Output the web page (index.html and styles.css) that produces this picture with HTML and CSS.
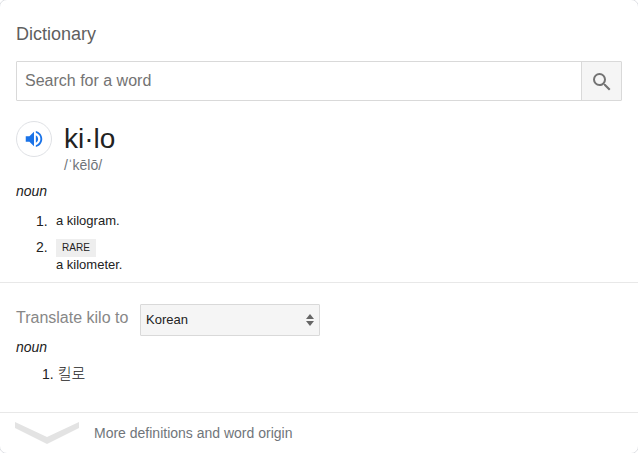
FILE: index.html
```html
<!DOCTYPE html>
<html lang="en">
<head>
<meta charset="utf-8">
<title>Dictionary</title>
<link rel="stylesheet" href="styles.css">
</head>
<body>
<main class="card">
  <section class="dictionary">
    <h1 class="title">Dictionary</h1>
    <form class="search">
      <span class="search-text">Search for a word</span>
      <span class="search-button">
        <svg width="24" height="24" viewBox="0 0 24 24"><path fill="#737373" d="M15.500 14h-.79l-.28-.27A6.471 6.471 0 0 0 16 9.500 6.500 6.500 0 1 0 9.500 16c1.610 0 3.090-.59 4.230-1.570l.27.28v.79l5 4.990L20.490 19l-4.990-5zm-6 0C7.010 14 5 11.990 5 9.500S7.010 5 9.500 5 14 7.010 14 9.500 11.990 14 9.500 14z"/></svg>
      </span>
    </form>
    <header class="word">
      <span class="speaker">
        <svg width="22" height="22" viewBox="0 0 24 24"><path fill="#1a73e8" d="M3 9v6h4l5 5V4L7 9H3zm13.500 3A4.500 4.500 0 0 0 14 7.970v8.050c1.480-.73 2.500-2.250 2.500-4.020zM14 3.230v2.060c2.890.86 5 3.540 5 6.710s-2.110 5.850-5 6.710v2.060c4.010-.91 7-4.490 7-8.770s-2.990-7.860-7-8.770z"/></svg>
      </span>
      <div>
        <div class="headword">ki·lo</div>
        <div class="phonetic">/ˈkēlō/</div>
      </div>
    </header>
    <div class="pos">noun</div>
    <div class="definition first"><span class="number">1.</span><span>a kilogram.</span></div>
    <div class="definition second"><span class="number">2.</span><div><span class="tag">RARE</span><div>a kilometer.</div></div></div>
  </section>
  <section class="translate">
    <div class="translate-row">
      <span class="translate-label">Translate kilo to</span>
      <div class="select"><span>Korean</span>
        <svg width="8" height="12" viewBox="0 0 8 12"><path fill="#666" d="M0 5L4 0l4 5zM0 7h8l-4 5z"/></svg>
      </div>
    </div>
    <div class="pos">noun</div>
    <div class="translation"><span>1.</span><span class="korean" lang="ko">킬로</span></div>
  </section>
  <footer class="more">
    <svg class="chevron" width="64" height="22" viewBox="0 0 64 22"><path fill="#e3e3e3" d="M0 0l32 15L64 0v6L32 22 0 6z"/></svg>
    <span>More definitions and word origin</span>
  </footer>
</main>
</body>
</html>
```
FILE: styles.css
```css
* { box-sizing: border-box; }
body {
  margin: 0;
  overflow: hidden;
  background: #fff;
  color: #222;
  font-family: "Liberation Sans", Arial, "Noto Sans CJK KR", sans-serif;
  font-size: 13px;
}
.card {
  width: 640px;
  height: 455px;
  margin: -1px;
  border: 1px solid #dfe1e5;
  border-radius: 8px;
}
.dictionary { height: 283px; padding: 22px 16px 0; border-bottom: 1px solid #e8e8e8; }
.title { margin: 0; font-size: 18px; font-weight: 400; line-height: 24px; color: #5f5f5f; }
.search {
  display: flex;
  height: 40px;
  margin: 15px 0 0;
  border: 1px solid #d9d9d9;
  border-radius: 1px;
}
.search-text { flex: 1; padding-left: 8px; font-size: 16px; line-height: 37px; color: #737373; }
.search-button {
  display: flex;
  align-items: center;
  justify-content: center;
  width: 40px;
  padding-top: 2px;
  border-left: 1px solid #d9d9d9;
  background: #f5f5f5;
}
.word { display: flex; gap: 12px; height: 62px; padding-top: 20px; }
.speaker {
  display: flex;
  align-items: center;
  justify-content: center;
  width: 36px;
  height: 36px;
  border: 1px solid #dfe1e5;
  border-radius: 50%;
}
.headword { font-size: 28px; line-height: 36px; }
.phonetic { font-size: 14px; line-height: 17px; color: #70757a; }
.word + .pos { margin-top: 19px; }
.pos { font-size: 14px; font-style: italic; line-height: 18px; }
.definition { display: flex; padding-left: 20px; line-height: 17px; }
.number { width: 20px; font-size: 14px; line-height: 18px; }
.first { margin-top: 12px; }
.second { margin-top: 8px; }
.tag {
  display: block;
  width: 40px;
  height: 18px;
  margin: 1px 0 -1px;
  background: #eee;
  font-size: 10px;
  line-height: 18px;
  text-align: center;
}
.translate { height: 130px; padding: 21px 16px 0; border-bottom: 1px solid #e8e8e8; }
.translate-row { display: flex; height: 32px; }
.translate-label { width: 124px; font-size: 16px; line-height: 27px; color: #878787; }
.select {
  display: flex;
  align-items: center;
  justify-content: space-between;
  width: 180px;
  padding: 0 5px;
  border: 1px solid #d9d9d9;
  border-radius: 1px;
  background: #f5f5f5;
}
.select span { padding-bottom: 2px; }
.translate .pos { margin-top: 2px; }
.translation { display: flex; gap: 4px; margin: 9px 0 0 26px; font-size: 14px; line-height: 18px; }
.korean { font-size: 15px; font-weight: 300; }
.more { display: flex; gap: 15px; padding: 9px 0 0 15px; color: #70757a; font-size: 14px; line-height: 22px; }
```
